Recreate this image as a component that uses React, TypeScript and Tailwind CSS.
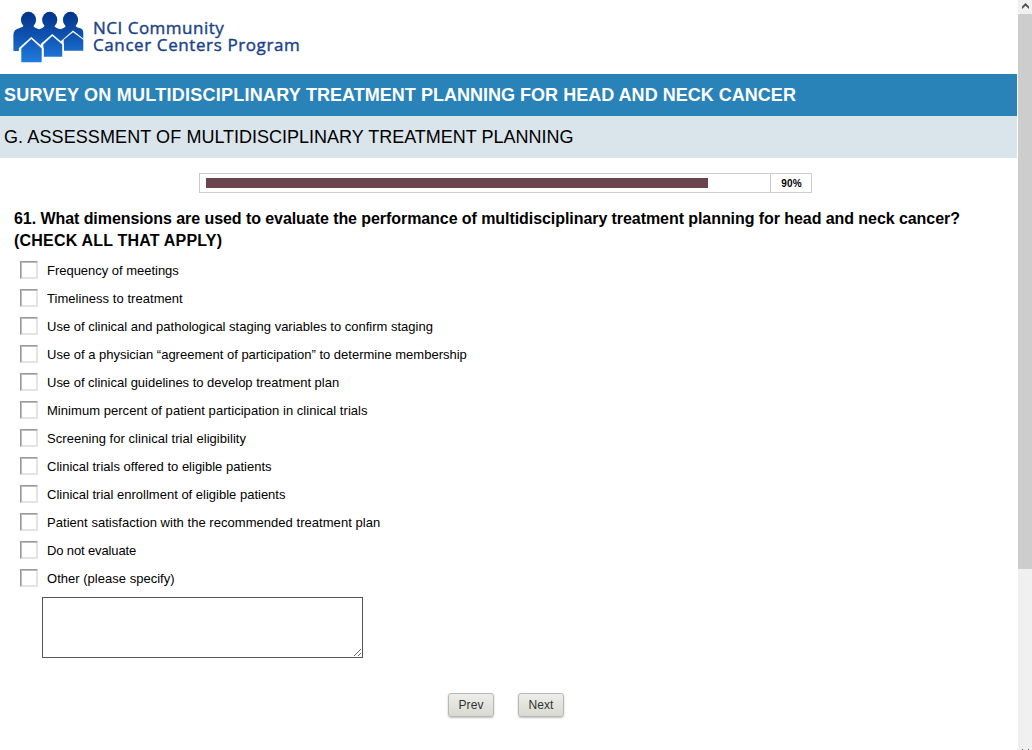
import React from "react";

type Option = { label: string; tracking: string };

const options: Option[] = [
  { label: "Frequency of meetings", tracking: "tracking-[-0.02px]" },
  { label: "Timeliness to treatment", tracking: "tracking-[0.05px]" },
  { label: "Use of clinical and pathological staging variables to confirm staging", tracking: "tracking-[0px]" },
  { label: "Use of a physician “agreement of participation” to determine membership", tracking: "tracking-[0px]" },
  { label: "Use of clinical guidelines to develop treatment plan", tracking: "tracking-[-0.01px]" },
  { label: "Minimum percent of patient participation in clinical trials", tracking: "tracking-[0.045px]" },
  { label: "Screening for clinical trial eligibility", tracking: "tracking-[0.045px]" },
  { label: "Clinical trials offered to eligible patients", tracking: "tracking-[0px]" },
  { label: "Clinical trial enrollment of eligible patients", tracking: "tracking-[0px]" },
  { label: "Patient satisfaction with the recommended treatment plan", tracking: "tracking-[0.04px]" },
  { label: "Do not evaluate", tracking: "tracking-[-0.13px]" },
  { label: "Other (please specify)", tracking: "tracking-[0.02px]" },
];

function Logo() {
  return (
    <svg width="72" height="54" viewBox="0 0 72 54" className="block shrink-0" aria-hidden="true">
      <defs>
        <linearGradient id="people" x1="0" y1="0" x2="0" y2="54" gradientUnits="userSpaceOnUse">
          <stop offset="0" stopColor="#003285" />
          <stop offset="0.45" stopColor="#0f52b0" />
          <stop offset="1" stopColor="#2180e4" />
        </linearGradient>
      </defs>
      <g fill="url(#people)">
        <ellipse cx="15.5" cy="8.8" rx="7.6" ry="8" />
        <ellipse cx="36.7" cy="8.8" rx="7.6" ry="8" />
        <ellipse cx="57.5" cy="8.8" rx="7.6" ry="8" />
        <path d="M.4 44V24Q.4 18.5 6 17.2Q10 16.3 11 14.5H20Q21.5 17 26.2 18.3Q30.5 17 32 14.5H41Q42.5 17 47.2 18.3Q52 17 53 14.5H62Q63.5 16.5 67 17.2Q70.3 18 70.3 22V40H.4Z" />
      </g>
      <path d="M48 30 60 19.4 71.5 28.5V42H48Z" fill="#fff" />
      <path d="M50.7 39.7V28.8L60 21.2 70.3 28.8V39.7Z" fill="url(#people)" />
      <path d="M27.7 53V33.1L39.3 22.9 51 33.1V53Z" fill="#fff" />
      <path d="M30.3 45.8V33.6L39.3 24.9 49.2 33.6V45.8Z" fill="url(#people)" />
      <path d="M5.9 53V37L18.3 26 30.8 37V54H5.9Z" fill="#fff" />
      <path d="M8.3 51.2V37.4L18.3 28 28.7 37.4V51.2Z" fill="url(#people)" />
    </svg>
  );
}

function Scrollbar() {
  return (
    <aside className="flex h-full w-[14px] shrink-0 flex-col overflow-hidden bg-[#f0f0f0]">
      <div className="h-[14px] shrink-0 pl-[4px] pt-[3px]">
        <svg width="7" height="6" viewBox="0 0 7 6" className="block">
          <path d="M0 6V3.5L3.5 0 7 3.5V6L3.5 2.8Z" fill="#505050" />
        </svg>
      </div>
      <div className="h-[555px] shrink-0 bg-[#cdcdcd]" />
      <div className="mt-auto flex h-px shrink-0 justify-between pl-[4px] pr-[3px]">
        <span className="h-px w-px bg-[#505050]" />
        <span className="h-px w-px bg-[#505050]" />
      </div>
    </aside>
  );
}

function NavButton({ children }: { children: React.ReactNode }) {
  return (
    <button
      type="button"
      className="h-6 w-[46px] rounded-[3px] border border-[#b8b8b5] bg-linear-to-b from-[#eeeeea] to-[#d8d9d0] text-center text-[12px] leading-[21px] tracking-[0.1px] text-[#333] shadow-[0_1px_2px_rgba(0,0,0,0.25)]"
    >
      {children}
    </button>
  );
}

export default function App() {
  return (
    <div className="flex h-[750px] w-[1032px] overflow-hidden bg-white font-['Liberation_Sans',Arial,sans-serif] text-black">
      <main className="mr-px w-[1017px] shrink-0">
        <header className="flex h-[74px] items-start pl-[13px] pt-[11px]">
          <Logo />
          <div className="ml-[8px] mt-[8px] whitespace-nowrap font-['Open_Sans',sans-serif] text-[17px] leading-[17px] text-[#1a4288] [-webkit-text-stroke:0.4px_#1a4288]">
            <div className="tracking-[0.5px]">NCI Community</div>
            <div className="tracking-[0.6px]">Cancer Centers Program</div>
          </div>
        </header>
        <h1 className="h-[42px] whitespace-nowrap bg-[#2983b9] pl-1 text-[18px] font-bold leading-[42px] text-white">
          <span className="tracking-[0.25px]">SURVEY ON MULTIDISCIPLINARY </span>
          <span className="tracking-[0.02px]">TREATMENT PLANNING FOR HEAD AND NECK CANCER</span>
        </h1>
        <h2 className="h-[42px] whitespace-nowrap bg-[#dae5eb] pl-1 text-[18px] leading-[42px]">
          <span className="tracking-[0.1px]">G. ASSESSMENT OF </span>
          <span>MULTIDISCIPLINARY TREATMENT PLANNING</span>
        </h2>
        <div className="ml-[199px] mt-[15px] flex h-5 w-[613px] border border-[#ccc]">
          <div className="w-[571px] border-r border-[#ccc] pl-[6px] pt-1">
            <div className="h-[10px] w-[502px] bg-[#6c444f]" />
          </div>
          <div className="flex-1 pl-px pt-px text-center text-[10px] font-bold leading-[18px] tracking-[0.2px]">90%</div>
        </div>
        <section className="ml-[14px] mt-[15px]">
          <p className="whitespace-nowrap text-[16px] font-bold leading-[22px]">
            <span className="tracking-[-0.067px]">61. What dimensions are used to evaluate the performance of multidisciplinary treatment planning for head and neck cancer?</span>
            <br />
            <span className="tracking-[0.2px]">(CHECK ALL THAT APPLY)</span>
          </p>
          <div className="ml-[6px] mt-1">
            {options.map(({ label, tracking }) => (
              <label key={label} className="flex h-7 items-center">
                <input
                  type="checkbox"
                  className="h-[18px] w-[18px] shrink-0 appearance-none border border-b-[#e3e3e3] border-l-[#999] border-r-[#e3e3e3] border-t-[#999] bg-white shadow-[inset_1px_1px_0_#bcbcbc,inset_-1px_-1px_0_#e3e3e3]"
                />
                <span className={`ml-[9px] whitespace-nowrap pt-[2px] text-[13px] leading-4 ${tracking}`}>{label}</span>
              </label>
            ))}
          </div>
          <textarea
            aria-label="Other"
            className="ml-7 mt-[5px] block h-[61px] w-[321px] resize border border-[#555] bg-white"
          />
        </section>
        <div className="ml-[448px] mt-[35px] flex gap-6">
          <NavButton>Prev</NavButton>
          <NavButton>Next</NavButton>
        </div>
      </main>
      <Scrollbar />
    </div>
  );
}
